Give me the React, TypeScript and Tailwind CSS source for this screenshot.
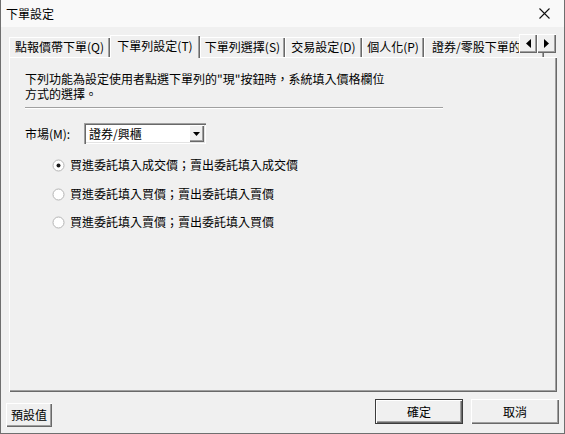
import React from 'react';

const raised =
  'shadow-[inset_1px_1px_0_#ffffff,inset_-1px_-1px_0_#696969,inset_-2px_-2px_0_#a0a0a0]';

const tabs = [
  { label: '點報價帶下單(Q)', w: 'w-[101px]' },
  { label: '下單列設定(T)', w: 'w-[90px]', active: true },
  { label: '下單列選擇(S)', w: 'w-[85px]' },
  { label: '交易設定(D)', w: 'w-[77px]' },
  { label: '個人化(P)', w: 'w-[62px]' },
  { label: '證券/零股下單的設定', w: 'w-[120px]', clip: true },
];

const options = [
  '買進委託填入成交價；賣出委託填入成交價',
  '買進委託填入買價；賣出委託填入賣價',
  '買進委託填入賣價；賣出委託填入買價',
];

const Radio: React.FC<{ checked?: boolean }> = ({ checked }) => (
  <svg width="13" height="13" viewBox="0 0 13 13" className="shrink-0">
    <circle cx="6.5" cy="6.5" r="5.5" fill="#ffffff" stroke="#b4b4b4" strokeWidth="1" />
    {checked && <circle cx="6.5" cy="6.5" r="2" fill="#1a1a1a" />}
  </svg>
);

const App: React.FC = () => {
  return (
    <div className="w-[565px] h-[434px] bg-[#f0f0f0] border-x border-b border-[#6f6f6f] flex flex-col font-['Noto_Sans_CJK_TC',sans-serif] text-[12px] text-black overflow-hidden">
      {/* title bar */}
      <div className="h-[27px] bg-[#f9f9f9] flex items-center justify-between pl-[5px] pr-[14px] shrink-0">
        <span className="leading-none">下單設定</span>
        <svg width="11" height="11" viewBox="0 0 11 11">
          <path d="M0.5 0.5 L10.5 10.5 M10.5 0.5 L0.5 10.5" stroke="#111" strokeWidth="1.1" />
        </svg>
      </div>

      {/* tab strip */}
      <div className="relative mt-[8px] ml-[8px] w-[548px] h-[22px] flex items-end shrink-0">
        {tabs.map((t) =>
          t.active ? (
            <div
              key={t.label}
              className={`relative z-10 ${t.w} h-[23px] -mb-px bg-[#f0f0f0] flex items-start justify-center pt-[2px] whitespace-nowrap shadow-[inset_1px_1px_0_#ffffff,inset_-1px_0_0_#696969,inset_-2px_0_0_#a0a0a0]`}
            >
              {t.label}
            </div>
          ) : (
            <div
              key={t.label}
              className={`${t.w} h-[20px] flex items-center ${t.clip ? 'justify-start pl-[8px] overflow-hidden' : 'justify-center'} whitespace-nowrap shadow-[inset_1px_1px_0_#ffffff,inset_-1px_0_0_#696969,inset_-2px_0_0_#a0a0a0]`}
            >
              {t.label}
            </div>
          )
        )}
        <div className="absolute left-[510px] top-[-1px] z-20 flex">
          <div className={`w-[18px] h-[19px] bg-[#f0f0f0] flex items-center justify-center ${raised}`}>
            <svg width="5" height="9" viewBox="0 0 5 9">
              <path d="M5 0 L0 4.5 L5 9 Z" fill="#000" />
            </svg>
          </div>
          <div className={`w-[19px] h-[19px] bg-[#f0f0f0] flex items-center justify-center ${raised}`}>
            <svg width="5" height="9" viewBox="0 0 5 9">
              <path d="M0 0 L5 4.5 L0 9 Z" fill="#000" />
            </svg>
          </div>
        </div>
      </div>

      {/* panel */}
      <div className="ml-[8px] w-[548px] h-[335px] pt-[14px] pl-[16px] shrink-0 shadow-[inset_1px_1px_0_#ffffff,inset_-1px_-1px_0_#696969,inset_-2px_-2px_0_#a0a0a0]">
        <p className="leading-[15px]">
          下列功能為設定使用者點選下單列的"現"按鈕時，系統填入價格欄位
          <br />
          方式的選擇。
        </p>
        <div className="mt-[6px] w-[418px] h-[2px] border-t border-b border-t-[#a0a0a0] border-b-white" />

        <div className="mt-[14px] flex items-center h-[21px]">
          <span className="w-[59px]">市場(M):</span>
          <div className="w-[122px] h-[21px] bg-white flex items-center justify-between pl-[5px] pr-[2px] shadow-[inset_1px_1px_0_#a0a0a0,inset_2px_2px_0_#696969,inset_-1px_-1px_0_#ffffff,inset_-2px_-2px_0_#e3e3e3]">
            <span>證券/興櫃</span>
            <div className={`w-[15px] h-[17px] bg-[#f0f0f0] flex items-center justify-center ${raised}`}>
              <svg width="7" height="4" viewBox="0 0 7 4">
                <path d="M0 0 L7 0 L3.5 4 Z" fill="#000" />
              </svg>
            </div>
          </div>
        </div>

        <div className="mt-[13px] ml-[27px] flex flex-col">
          {options.map((o, i) => (
            <div
              key={o}
              className={`h-[16px] flex items-center gap-[5px] ${i === 1 ? 'mt-[13px]' : i === 2 ? 'mt-[12px]' : ''}`}
            >
              <Radio checked={i === 0} />
              <span>{o}</span>
            </div>
          ))}
        </div>
      </div>

      {/* buttons */}
      <div className="flex items-start flex-1">
        <button className={`ml-[5px] mt-[11px] w-[46px] h-[24px] bg-[#f0f0f0] flex items-center justify-center ${raised}`}>
          預設值
        </button>
        <div className="ml-auto mr-[5px] mt-[7px] flex gap-[8px]">
          <button className="w-[88px] h-[25px] bg-[#f0f0f0] border border-[#3c3c3c] flex items-center justify-center shadow-[inset_1px_1px_0_#ffffff,inset_-1px_-1px_0_#696969,inset_-2px_-2px_0_#a0a0a0]">
            確定
          </button>
          <button className={`w-[88px] h-[25px] bg-[#f0f0f0] flex items-center justify-center ${raised}`}>
            取消
          </button>
        </div>
      </div>
    </div>
  );
};

export default App;
